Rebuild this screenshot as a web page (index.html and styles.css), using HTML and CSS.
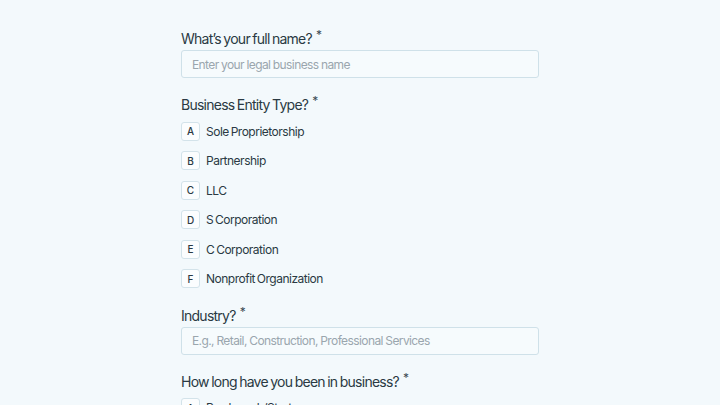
FILE: index.html
```html
<!DOCTYPE html>
<html>
<head lang="en">
    <meta charset="UTF-8">
    <title>Business Questionnaire</title>
    <link rel="stylesheet" href="styles.css">
</head>
<body>
<div class="form">
    <div class="field">
        <label class="question">What’s your full name?<span class="req">*</span></label>
        <input type="text" class="text-input" placeholder="Enter your legal business name"/>
    </div>
    <div class="field choice">
        <div class="question">Business Entity Type?<span class="req">*</span></div>
        <ul class="options">
            <li><span class="key">A</span>Sole Proprietorship</li>
            <li><span class="key">B</span>Partnership</li>
            <li><span class="key">C</span>LLC</li>
            <li><span class="key">D</span>S Corporation</li>
            <li><span class="key">E</span>C Corporation</li>
            <li><span class="key">F</span>Nonprofit Organization</li>
        </ul>
    </div>
    <div class="field">
        <label class="question">Industry?<span class="req">*</span></label>
        <input type="text" class="text-input" placeholder="E.g., Retail, Construction, Professional Services"/>
    </div>
    <div class="field choice">
        <div class="question">How long have you been in business?<span class="req">*</span></div>
        <ul class="options">
            <li><span class="key">A</span>Pre-launch/Startup</li>
            <li><span class="key">B</span>Less than 1 year</li>
        </ul>
    </div>
</div>
</body>
</html>
```

FILE: styles.css
```css
html, body {
    margin: 0;
    padding: 0;
    background-color: #f3f9fc;
    font-family: "Inter", "Noto Sans", sans-serif;
    color: #2a3943;
    overflow: hidden;
}

.form {
    width: 358px;
    margin: 0 auto;
    padding-top: 28px;
}

.field {
    display: flex;
    flex-direction: column;
    margin-bottom: 16px;
}

.field.choice {
    margin-bottom: 17px;
}

.question {
    display: block;
    font-size: 14px;
    line-height: 21px;
    height: 21px;
    margin-bottom: 1px;
    letter-spacing: -0.75px;
    word-spacing: -0.8px;
}

.req {
    font-size: 12px;
    position: relative;
    top: -5px;
    margin-left: 4px;
    color: #3b4a54;
}

.text-input {
    box-sizing: border-box;
    height: 28px;
    width: 100%;
    border: 1px solid #cfe1e9;
    border-radius: 3px;
    background-color: #f6fbfd;
    padding: 0 10px;
    font-family: inherit;
    font-size: 12px;
    letter-spacing: -0.6px;
    word-spacing: -0.3px;
    color: #2a3943;
    outline: none;
}

.text-input::placeholder {
    color: #9aa6ae;
}

.options {
    list-style: none;
    margin: 6px 0 0 0;
    padding: 0;
    display: flex;
    flex-direction: column;
    gap: 11.6px;
}

.options li {
    display: flex;
    align-items: center;
    height: 18px;
    font-size: 12px;
    letter-spacing: -0.5px;
    word-spacing: -1px;
}

.key {
    box-sizing: border-box;
    width: 19px;
    height: 19px;
    border: 1px solid #d3e3ea;
    border-radius: 3px;
    background-color: #fbfdfe;
    display: flex;
    align-items: center;
    justify-content: center;
    font-size: 10px;
    font-weight: 500;
    letter-spacing: 0;
    margin-right: 6px;
}
```
